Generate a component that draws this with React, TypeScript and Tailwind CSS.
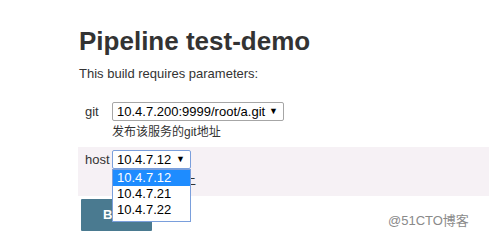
import React from "react";

const font = { fontFamily: '"Liberation Sans", Arial, "Noto Sans CJK SC", sans-serif' };

export default function App() {
  return (
    <div
      className="relative w-[489px] h-[248px] overflow-hidden bg-white text-[#333]"
      style={font}
    >
      <div className="pl-[78px] pt-[26px]">
        <h1 className="pl-[1px] text-[26px] leading-[30px] font-bold text-[#333]">
          Pipeline test-demo
        </h1>
        <p className="pl-[1px] mt-[10px] text-[13px] leading-[16px]">
          This build requires parameters:
        </p>

        {/* git param */}
        <div className="mt-[20px] flex">
          <div className="w-[34px] pl-[7px] text-[13px] leading-[19px]">git</div>
          <div className="flex flex-col">
            <div className="h-[19px] w-[172px] border border-[#a6a6a6] rounded-[2px] bg-white flex items-center justify-between pl-[4px] pr-[5px] text-[13px] text-black">
              <span>10.4.7.200:9999/root/a.git</span>
              <span className="text-[9px]">▼</span>
            </div>
            <div className="mt-[3px] text-[12px] leading-[16px] text-[#333]">发布该服务的git地址</div>
          </div>
        </div>

        {/* host param */}
        <div className="mt-[7px] flex bg-[#f6f1f5] pt-[3px] pb-[7px]">
          <div className="w-[34px] pl-[7px] text-[13px] leading-[19px]">host</div>
          <div className="flex flex-col">
            <div className="relative">
              <div className="h-[19px] w-[79px] border border-[#7a9fdc] rounded-[2px] bg-white flex items-center justify-between pl-[4px] pr-[5px] text-[13px] text-black">
                <span>10.4.7.12</span>
                <span className="text-[9px]">▼</span>
              </div>
              <div className="absolute left-0 top-full z-10 w-[79px] border border-[#7a9fdc] bg-white text-[13px] leading-[16px] text-black">
                <div className="bg-[#1e8cff] text-white pl-[4px]">10.4.7.12</div>
                <div className="pl-[4px]">10.4.7.21</div>
                <div className="pl-[4px] pb-[3px]">10.4.7.22</div>
              </div>
            </div>
            <div className="mt-[4px] text-[12px] leading-[16px] text-[#333]">发布到该主机上</div>
          </div>
        </div>

        <button className="mt-[3px] ml-[3px] h-[32px] w-[71px] bg-[#4a7a90] text-white font-bold text-[13px] text-left pl-[22px] rounded-[1px]">
          Build
        </button>
      </div>

      <div className="absolute left-[388px] top-[211px] text-[13px] text-[#8a8a8a]">
        @51CTO博客
      </div>
    </div>
  );
}
